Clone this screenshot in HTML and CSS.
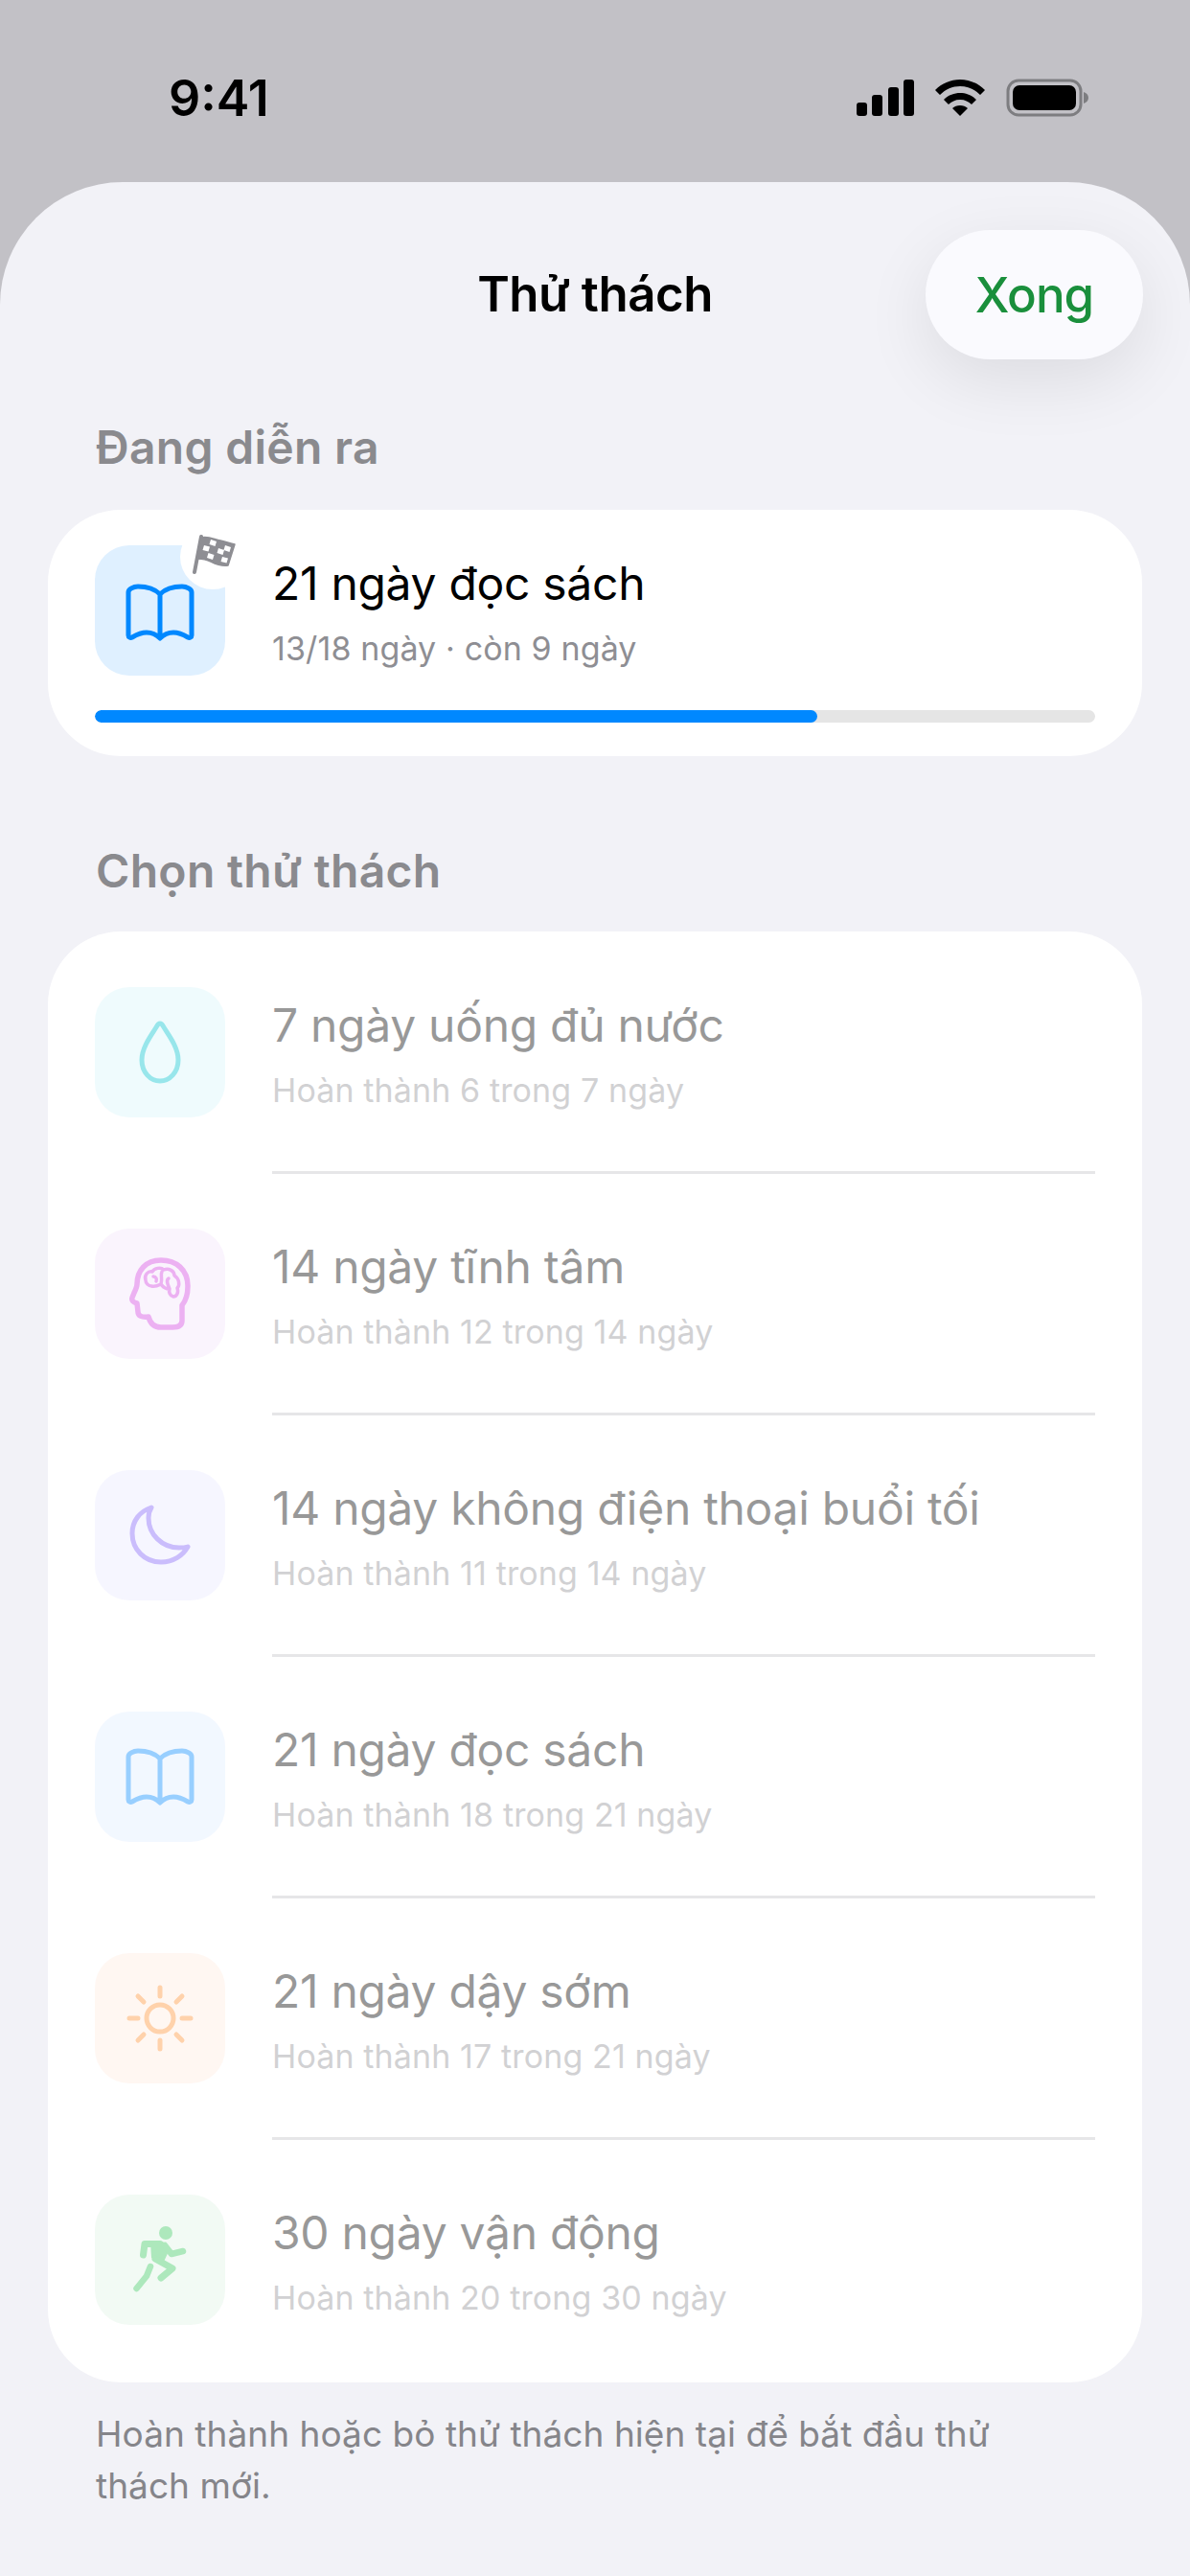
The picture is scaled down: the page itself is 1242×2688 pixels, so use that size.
FILE: index.html
```html
<!DOCTYPE html>
<html lang="vi">
<head>
    <meta charset="UTF-8">
    <title>Thử thách</title>
    <link rel="stylesheet" href="styles.css">
</head>
<body>
    <svg class="defs" width="0" height="0">
        <symbol id="book" viewBox="0 0 72 60">
            <path d="M36 11C30 5 21 3 13 3C8 3 3 6 3 9V54C3 56 5 57 7 56C12 53 17 51 22 51C28 51 32 53 36 57C40 53 44 51 50 51C55 51 60 53 65 56C67 57 69 56 69 54V9C69 6 64 3 59 3C51 3 42 5 36 11ZM36 11V57" fill="none" stroke="currentColor" stroke-width="5" stroke-linejoin="round"/>
        </symbol>
    </svg>

    <header class="status-bar">
        <span class="time">9:41</span>
        <div class="status-icons">
            <svg width="60" height="38" viewBox="0 0 60 38" fill="#000">
                <rect x="0" y="24" width="11" height="14" rx="3"/>
                <rect x="16" y="16" width="11" height="22" rx="3"/>
                <rect x="33" y="8" width="11" height="30" rx="3"/>
                <rect x="49" y="0" width="11" height="38" rx="3"/>
            </svg>
            <svg width="52" height="38" viewBox="0 0 52 38" fill="#000">
                <path d="M26 0C16 0 7 4 0 11L5 16C11 10 18 7 26 7C34 7 41 10 47 16L52 11C45 4 36 0 26 0Z"/>
                <path d="M26 14C20 14 14 16 9 21L14 26C17 23 21 21 26 21C31 21 35 23 38 26L43 21C38 16 32 14 26 14Z"/>
                <path d="M26 27C23 27 20 28 18 30L26 38L34 30C32 28 29 27 26 27Z"/>
            </svg>
            <svg width="86" height="40" viewBox="0 0 86 40">
                <rect x="2" y="2" width="76" height="36" rx="11" fill="none" stroke="#7d7d80" stroke-width="3"/>
                <rect x="7" y="7" width="66" height="26" rx="7" fill="#000"/>
                <path d="M81 14C84 15 86 17 86 20C86 23 84 25 81 26Z" fill="#7d7d80"/>
            </svg>
        </div>
    </header>

    <main class="sheet">
        <div class="nav">
            <h1 class="nav-title">Thử thách</h1>
            <button class="done-btn">Xong</button>
        </div>

        <h2 class="section-label">Đang diễn ra</h2>
        <section class="card current">
            <div class="row-main">
                <div class="icon-box icon-current">
                    <svg class="ic-book" width="72" height="60"><use href="#book"/></svg>
                    <span class="flag-badge">
                        <svg class="ic-flag" width="46" height="42" viewBox="0 0 46 42">
                            <path d="M10 2L3 39" fill="none" stroke="#8e8e93" stroke-width="4" stroke-linecap="round"/>
                            <path d="M10 3C17 1 24 5 30 6C35 7 40 9 45 10L38 32C32 33 26 31 20 28C16 26 11 25 6 25Z" fill="#8e8e93" stroke="#8e8e93" stroke-width="1.5" stroke-linejoin="round"/>
                            <path d="M20 5l6 2l-1.5 5l-6 -2zM35 11l6 2l-1.5 5l-6 -2zM13 11l6 1.5l-1.5 5l-6 -1.5zM28 14l6 2l-1.5 5l-6 -2zM17.5 19l6 2l-1.5 5l-6 -2zM32 23l6 1.5l-1.5 5l-6 -1.5z" fill="#fff"/>
                        </svg>
                    </span>
                </div>
                <div class="row-text">
                    <div class="row-title">21 ngày đọc sách</div>
                    <div class="row-sub">13/18 ngày · còn 9 ngày</div>
                </div>
            </div>
            <div class="progress"><div class="progress-fill" style="width: 72.2%"></div></div>
        </section>

        <h2 class="section-label second">Chọn thử thách</h2>
        <section class="card list">
            <div class="row">
                <div class="row-main faded">
                    <div class="icon-box icon-water">
                        <svg width="44" height="66" viewBox="0 0 44 66"><path d="M22 3C24 3 25 5 26 7C31 15 41 28 41 41C41 54 32 63 22 63C12 63 3 54 3 41C3 28 13 15 18 7C19 5 20 3 22 3Z" fill="none" stroke="currentColor" stroke-width="5" stroke-linejoin="round"/></svg>
                    </div>
                    <div class="row-text">
                        <div class="row-title">7 ngày uống đủ nước</div>
                        <div class="row-sub">Hoàn thành 6 trong 7 ngày</div>
                    </div>
                </div>
            </div>
            <div class="row">
                <div class="row-main faded">
                    <div class="icon-box icon-mind">
                        <svg width="64" height="76" viewBox="0 0 64 76" fill="none" stroke="currentColor" stroke-linejoin="round" stroke-linecap="round">
                            <path stroke-width="5.5" d="M55 66V50C60 44 61 38 61 30C61 13 49 3 33 3C17 3 8 14 8 28C8 31 7 33 5 37L3 42C2 45 4 47 8 48L9 57C9 61 13 63 20 62C22 70 27 73 33 73H45C51 73 55 71 55 66Z"/>
                            <path stroke-width="3.5" d="M17 24C15 18 20 14 24 15C26 11 33 10 36 13C41 11 47 14 47 19C52 22 53 29 50 32C52 37 49 41 46 41C42 40 41 36 42 33C38 33 35 31 33 28C29 30 26 31 23 30C20 30 17 27 17 24ZM25 20C28 20 29 23 28 25M34 15C32 19 35 21 33 28M41 22C38 24 40 28 42 33"/>
                        </svg>
                    </div>
                    <div class="row-text">
                        <div class="row-title">14 ngày tĩnh tâm</div>
                        <div class="row-sub">Hoàn thành 12 trong 14 ngày</div>
                    </div>
                </div>
            </div>
            <div class="row">
                <div class="row-main faded">
                    <div class="icon-box icon-moon">
                        <svg width="64" height="64" viewBox="0 0 64 64"><path d="M23 3C11 7 3 17 3 30C3 47 16 60 33 60C46 60 56 53 61 44C58 45 55 45 52 45C34 45 20 31 20 14C20 10 21 6 23 3Z" fill="none" stroke="currentColor" stroke-width="5" stroke-linejoin="round"/></svg>
                    </div>
                    <div class="row-text">
                        <div class="row-title">14 ngày không điện thoại buổi tối</div>
                        <div class="row-sub">Hoàn thành 11 trong 14 ngày</div>
                    </div>
                </div>
            </div>
            <div class="row">
                <div class="row-main faded">
                    <div class="icon-box icon-read">
                        <svg width="72" height="60"><use href="#book"/></svg>
                    </div>
                    <div class="row-text">
                        <div class="row-title">21 ngày đọc sách</div>
                        <div class="row-sub">Hoàn thành 18 trong 21 ngày</div>
                    </div>
                </div>
            </div>
            <div class="row">
                <div class="row-main faded">
                    <div class="icon-box icon-sun">
                        <svg width="70" height="70" viewBox="0 0 70 70" fill="none" stroke="currentColor" stroke-width="5" stroke-linecap="round">
                            <circle cx="35" cy="35" r="14"/>
                            <path d="M35 3V12M35 58V67M3 35H12M58 35H67M12 12L18 18M52 52L58 58M12 58L18 52M52 18L58 12"/>
                        </svg>
                    </div>
                    <div class="row-text">
                        <div class="row-title">21 ngày dậy sớm</div>
                        <div class="row-sub">Hoàn thành 17 trong 21 ngày</div>
                    </div>
                </div>
            </div>
            <div class="row">
                <div class="row-main faded">
                    <div class="icon-box icon-run">
                        <svg width="56" height="70" viewBox="0 0 56 70" fill="none" stroke="currentColor" stroke-linecap="round" stroke-linejoin="round">
                            <circle cx="34" cy="7" r="7" fill="currentColor" stroke="none"/>
                            <path d="M18 16H31L38 24L32 37L19 33Z" fill="currentColor" stroke="none"/>
                            <path stroke-width="7" d="M10.5 30L12 18.5H28"/>
                            <path stroke-width="6.5" d="M33 20L40 29L52 26"/>
                            <path stroke-width="7" d="M23 34L41 44L29 54"/>
                            <path stroke-width="6.5" d="M18 42L14 52L3.5 65"/>
                        </svg>
                    </div>
                    <div class="row-text">
                        <div class="row-title">30 ngày vận động</div>
                        <div class="row-sub">Hoàn thành 20 trong 30 ngày</div>
                    </div>
                </div>
            </div>
        </section>

        <p class="footnote">Hoàn thành hoặc bỏ thử thách hiện tại để bắt đầu thử thách mới.</p>
    </main>
</body>
</html>
```

FILE: styles.css
```css
* {
    box-sizing: border-box;
}

html, body {
    margin: 0;
    height: 100%;
}

body {
    width: 1242px;
    height: 2688px;
    overflow: hidden;
    display: flex;
    flex-direction: column;
    background-color: #c2c1c6;
    font-family: Inter, "Noto Sans", sans-serif;
}

.defs {
    position: absolute;
}

.status-bar {
    height: 190px;
    flex: none;
    padding: 78px 106px 0 176px;
    display: flex;
    justify-content: space-between;
    align-items: flex-start;
}

.time {
    font-size: 52px;
    font-weight: 600;
    line-height: 50px;
    color: #000;
}

.status-icons {
    display: flex;
    align-items: center;
    gap: 22px;
    padding-top: 4px;
}

.sheet {
    flex: 1;
    background-color: #f2f2f7;
    border-radius: 128px 128px 0 0;
    padding: 50px 50px 0;
}

.nav {
    position: relative;
    height: 135px;
    display: flex;
    align-items: center;
    justify-content: center;
}

.nav-title {
    margin: -3px 0 0;
    font-size: 51px;
    font-weight: 600;
    letter-spacing: -0.5px;
    color: #000;
}

.done-btn {
    position: absolute;
    right: -1px;
    top: 0;
    width: 227px;
    height: 135px;
    border: 0;
    border-radius: 68px;
    background-color: #fafafe;
    box-shadow: 0 22px 70px rgba(0, 0, 0, 0.09);
    font-family: inherit;
    font-size: 51px;
    font-weight: 500;
    letter-spacing: -1px;
    color: #1a8f3c;
}

.section-label {
    margin: 63px 0 0 50px;
    height: 58px;
    font-size: 48px;
    line-height: 58px;
    font-weight: 600;
    letter-spacing: 0.3px;
    color: #8a8a8e;
}

.section-label.second {
    margin-top: 91px;
}

.card {
    background-color: #fff;
    border-radius: 76px;
}

.current {
    margin-top: 36px;
    height: 257px;
    padding: 37px 49px 0;
}

.list {
    margin-top: 34px;
    height: 1514px;
    padding: 58px 49px 0;
}

.row {
    height: 252px;
}

.row + .row {
    position: relative;
}

.row + .row::before {
    content: "";
    position: absolute;
    left: 185px;
    right: 0;
    top: -60px;
    height: 3px;
    background-color: #e6e6e8;
}

.row-main {
    display: flex;
    align-items: center;
    gap: 49px;
}

.faded {
    opacity: 0.4;
}

.icon-box {
    position: relative;
    flex: none;
    width: 136px;
    height: 136px;
    border-radius: 36px;
    display: flex;
    align-items: center;
    justify-content: center;
}

.icon-current {
    background-color: #dff0ff;
    color: #0088ff;
}

.ic-book {
    margin-top: 4px;
}

.flag-badge {
    position: absolute;
    top: -22px;
    right: -21px;
    width: 68px;
    height: 68px;
    border-radius: 50%;
    background-color: #fff;
    display: flex;
    align-items: center;
    justify-content: center;
}

.ic-flag {
    margin: -4px 0 0 2px;
}

.icon-water {
    background-color: #d9f7fc;
    color: #00c3cf;
}

.icon-mind {
    background-color: #f5e4fc;
    color: #d13fe0;
}

.icon-moon {
    background-color: #ebebff;
    color: #7c5cf8;
}

.icon-read {
    background-color: #e1eeff;
    color: #0088ff;
}

.icon-sun {
    background-color: #ffede1;
    color: #ff9030;
}

.icon-run {
    background-color: #e1f3e6;
    color: #34c759;
}

.row-text {
    min-width: 0;
    padding-top: 3px;
}

.row-title {
    font-size: 48px;
    line-height: 58px;
    letter-spacing: -0.3px;
    color: #000;
}

.row-sub {
    margin-top: 18px;
    font-size: 34px;
    line-height: 42px;
    letter-spacing: 0.12px;
    color: #8e8e93;
}

.progress {
    margin-top: 36px;
    height: 13px;
    border-radius: 7px;
    background-color: #e5e5e5;
    overflow: hidden;
}

.progress-fill {
    height: 100%;
    border-radius: 7px;
    background-color: #0088ff;
}

.footnote {
    margin: 27px 100px 0 50px;
    font-size: 37px;
    line-height: 54px;
    letter-spacing: 0.05px;
    color: #85858a;
}
```
